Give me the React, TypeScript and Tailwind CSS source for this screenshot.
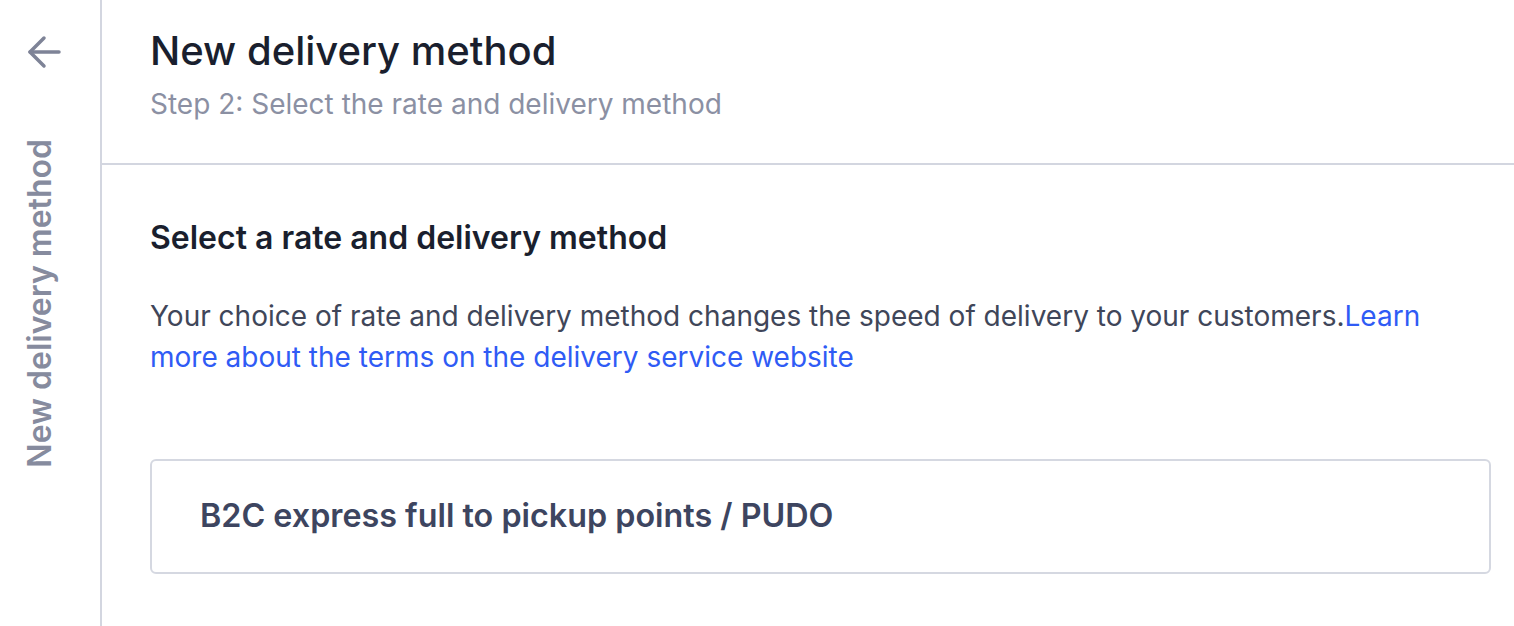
import React from "react";

const BackArrow: React.FC = () => (
  <svg width="34" height="34" viewBox="0 0 34 34" fill="none" stroke="#7e8397" strokeWidth="3.5" strokeLinecap="round" strokeLinejoin="round">
    <path d="M32 17H3" />
    <path d="M17 3 3 17l14 14" />
  </svg>
);

export default function App() {
  return (
    <div className="flex h-[626px] w-full bg-white font-['Inter',sans-serif] overflow-hidden">
      {/* side rail */}
      <aside className="flex w-[102px] shrink-0 flex-col items-center border-r-2 border-[#d3d6e0] pt-[35px]">
        <button type="button" className="ml-[-12px] flex items-center justify-center">
          <BackArrow />
        </button>
        <span className="mt-[70px] ml-[-20px] rotate-180 text-[32px] font-semibold leading-none text-[#868b9e] [writing-mode:vertical-rl]">
          New delivery method
        </span>
      </aside>

      <main className="flex min-w-0 flex-1 flex-col">
        {/* header */}
        <header className="border-b-2 border-[#d3d6e0] pl-[48px] pt-[29px] pb-[43px]">
          <h1 className="text-[40px] font-medium leading-[44px] text-[#1a1f2e]">New delivery method</h1>
          <p className="mt-[15px] text-[28px] leading-[32px] text-[#8b90a3]">
            Step 2: Select the rate and delivery method
          </p>
        </header>

        {/* content */}
        <section className="pl-[48px] pr-[23px] pt-[55px]">
          <h2 className="text-[32px] font-semibold leading-[36px] text-[#1a1f2e]">Select a rate and delivery method</h2>
          <p className="mt-[40px] text-[28px] leading-[41px] text-[#404659]">
            Your choice of rate and delivery method changes the speed of delivery to your customers.
            <a href="#" className="text-[#2f5bf5]">
              Learn more about the terms on the delivery service website
            </a>
          </p>

          <div className="mt-[81px] flex h-[115px] items-center rounded-md border-2 border-[#d5d8e1] px-[48px]">
            <span className="text-[32.3px] font-semibold text-[#3d4560]">B2C express full to pickup points / PUDO</span>
          </div>
        </section>
      </main>
    </div>
  );
}
